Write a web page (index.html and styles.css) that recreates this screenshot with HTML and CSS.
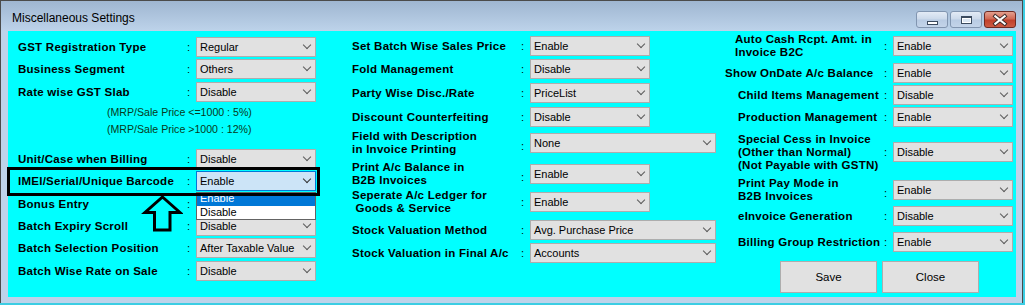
FILE: index.html
```html
<!DOCTYPE html>
<html lang="en">
<head>
  <meta charset="UTF-8" />
  <meta name="viewport" content="width=device-width, initial-scale=1.0" />
  <title>Miscellaneous Settings</title>
  <link rel="stylesheet" href="styles.css">
</head>
<body>
  <div class="window">
    <div class="titlebar">
      <span class="title">Miscellaneous Settings</span>
      <div class="caption-buttons">
        <button class="cap cap-min"><span class="min-glyph"></span></button>
        <button class="cap cap-max"><span class="max-glyph"></span></button>
        <button class="cap cap-close">
          <svg width="32" height="17" viewBox="0 0 32 17">
            <path d="M11 5 L21 13 M21 5 L11 13" stroke="#3a2a28" stroke-width="4.2" stroke-linecap="square" />
            <path d="M11 5 L21 13 M21 5 L11 13" stroke="#fff" stroke-width="2.2" stroke-linecap="square" />
          </svg>
        </button>
      </div>
    </div>

    <div class="client">
      <div class="col col-1">
        <div class="row"><span class="label">GST Registration Type</span><span class="colon">:</span><div class="combo">Regular</div></div>
        <div class="row"><span class="label">Business Segment</span><span class="colon">:</span><div class="combo">Others</div></div>
        <div class="row"><span class="label">Rate wise GST Slab</span><span class="colon">:</span><div class="combo">Disable</div></div>
        <div class="notes">
          <p>(MRP/Sale Price &lt;=1000 : 5%)</p>
          <p>(MRP/Sale Price &gt;1000 : 12%)</p>
        </div>
        <div class="row"><span class="label">Unit/Case when Billing</span><span class="colon">:</span><div class="combo">Disable</div></div>
        <div class="row"><span class="label">IMEI/Serial/Unique Barcode</span><span class="colon">:</span><div class="combo focused">Enable</div></div>
        <!-- combo sits under the open list, so nothing of it shows -->
        <div class="row"><span class="label">Bonus Entry</span><span class="colon">:</span><div class="combo"></div></div>
        <div class="row"><span class="label">Batch Expiry Scroll</span><span class="colon">:</span><div class="combo">Disable</div></div>
        <div class="row"><span class="label">Batch Selection Position</span><span class="colon">:</span><div class="combo">After Taxable Value</div></div>
        <div class="row"><span class="label">Batch Wise Rate on Sale</span><span class="colon">:</span><div class="combo">Disable</div></div>
      </div>

      <div class="col col-2">
        <div class="row"><span class="label">Set Batch Wise Sales Price</span><span class="colon">:</span><div class="combo">Enable</div></div>
        <div class="row"><span class="label">Fold Management</span><span class="colon">:</span><div class="combo">Disable</div></div>
        <div class="row"><span class="label">Party Wise Disc./Rate</span><span class="colon">:</span><div class="combo">PriceList</div></div>
        <div class="row"><span class="label">Discount Counterfeiting</span><span class="colon">:</span><div class="combo">Disable</div></div>
        <div class="row"><span class="label">Field with Description<br>in Invoice Printing</span><span class="colon low">:</span><div class="combo wide">None</div></div>
        <div class="row"><span class="label">Print A/c Balance in<br>B2B Invoices</span><span class="colon low">:</span><div class="combo">Enable</div></div>
        <div class="row"><span class="label">Seperate A/c Ledger for<br>&nbsp;Goods &amp; Service</span><span class="colon">:</span><div class="combo">Enable</div></div>
        <div class="row"><span class="label">Stock Valuation Method</span><span class="colon">:</span><div class="combo wide">Avg. Purchase Price</div></div>
        <div class="row"><span class="label">Stock Valuation in Final A/c</span><span class="colon">:</span><div class="combo wide">Accounts</div></div>
      </div>

      <div class="col col-3">
        <div class="row"><span class="label nudge">Auto Cash Rcpt. Amt. in<br>Invoice B2C</span><span class="colon">:</span><div class="combo">Enable</div></div>
        <div class="row"><span class="label shift">Show OnDate A/c Balance</span><span class="colon">:</span><div class="combo">Enable</div></div>
        <div class="row"><span class="label">Child Items Management</span><span class="colon">:</span><div class="combo">Disable</div></div>
        <div class="row"><span class="label">Production Management</span><span class="colon">:</span><div class="combo">Enable</div></div>
        <div class="row"><span class="label">Special Cess in Invoice<br>(Other than Normal)<br>(Not Payable with GSTN)</span><span class="colon">:</span><div class="combo">Disable</div></div>
        <div class="row"><span class="label">Print Pay Mode in<br>B2B Invoices</span><span class="colon low">:</span><div class="combo">Enable</div></div>
        <div class="row"><span class="label">eInvoice Generation</span><span class="colon">:</span><div class="combo">Disable</div></div>
        <div class="row"><span class="label">Billing Group Restriction</span><span class="colon">:</span><div class="combo">Enable</div></div>
        <div class="actions">
          <button class="btn">Save</button>
          <button class="btn">Close</button>
        </div>
      </div>

      <!-- open list of the IMEI combo and the annotation drawn over it -->
      <div class="droplist">
        <div class="opt active">Enable</div>
        <div class="opt">Disable</div>
      </div>
      <div class="focus-box"></div>
      <svg class="pointer" width="42" height="40" viewBox="0 0 42 40">
        <polygon points="21.5,3 39,18.5 29,18.5 29,36 13.5,36 13.5,18.5 4,18.5" fill="#00ffff" stroke="#000" stroke-width="3" />
      </svg>
    </div>
  </div>
</body>
</html>
```

FILE: styles.css
```css
:root {
  --client: #00ffff;
  --frame: #bed3ea;
  --combo-bg: #e1e1e1;
  --combo-border: #adadad;
  --focus-bg: #cce4f7;
  --focus-border: #0078d7;
}

* {
  box-sizing: border-box;
}

body {
  margin: 0;
  background: #3ccde3;
  font-family: "Liberation Sans", Arial, sans-serif;
  color: #000;
}

.window {
  width: 1023px;
  height: 303px;
  background: var(--frame);
  border: 1px solid #4b4b4b;
  border-bottom: none;
  display: flex;
  flex-direction: column;
}

.titlebar {
  height: 30px;
  flex: none;
  display: flex;
  align-items: flex-start;
  background: linear-gradient(#9fb6d1, #bdd3ea);
}

.title {
  margin: 10px 0 0 11px;
  font-size: 12px;
  line-height: 14px;
}

.caption-buttons {
  margin: 10px 6px 0 auto;
  display: flex;
  gap: 2px;
}

.cap {
  width: 32px;
  height: 17px;
  padding: 0;
  border: 1px solid #8195b0;
  border-radius: 3px;
  background: linear-gradient(#e3ebf5 0%, #cbd9ea 48%, #b8cbe3 52%, #c3d4e9 100%);
  display: flex;
  align-items: center;
  justify-content: center;
  position: relative;
}

.cap-close {
  border-color: #6e2a22;
  background: linear-gradient(#e4a08f 0%, #d26a55 45%, #c1412c 55%, #cd5b43 100%);
}

.min-glyph {
  width: 11px;
  height: 4px;
  margin-top: 6px;
  background: #fff;
  border: 1px solid #3b4a5e;
}

.max-glyph {
  width: 11px;
  height: 8px;
  border: 1px solid #3b4a5e;
  border-top-width: 2px;
  background: #dce6f2;
  box-shadow: inset 0 0 0 1px #fff;
}

.client {
  position: relative;
  height: 266px;
  margin: 0 6px 0 7px;
  padding: 5px 0 0 10px;
  background: var(--client);
  display: flex;
  align-items: flex-start;
}

.col {
  display: grid;
  align-content: start;
}

.col-1 {
  width: 298px;
  margin-top: 1px;
  grid-template-rows: 22px 23px 22px 45px 22px 23px 22px 22px 23px 20px;
}

.col-2 {
  width: 364px;
  margin-left: 36px;
  grid-template-rows: 23px 24px 24px 26px 31px 28px 28px 23px 20px;
}

.col-3 {
  width: 275px;
  margin-left: 22px;
  grid-template-rows: 27px 22px 22px 35px 38px 26px 26px 29px 32px;
}

.row {
  height: 20px;
  display: flex;
  align-items: center;
}

.label {
  flex: none;
  width: 169px;
  font-size: 11.5px;
  font-weight: bold;
  letter-spacing: 0.25px;
  line-height: 13px;
  white-space: nowrap;
}

.col-3 .label {
  width: 146px;
}

.col-3 .label.shift {
  width: 159px;
  margin-left: -13px;
}

.col-3 .label.nudge {
  width: 149px;
  margin-left: -3px;
}

.colon {
  flex: none;
  width: 9px;
  font-size: 11px;
}

.colon.low {
  padding-top: 6px;
}

.combo {
  position: relative;
  flex: none;
  width: 120px;
  height: 20px;
  padding-left: 3px;
  background: var(--combo-bg);
  border: 1px solid var(--combo-border);
  font-size: 11px;
  line-height: 18px;
  white-space: nowrap;
}

.combo.wide {
  width: 186px;
}

.combo::after {
  content: "";
  position: absolute;
  right: 5px;
  top: 4px;
  width: 5px;
  height: 5px;
  border-right: 1px solid #5a5a5a;
  border-bottom: 1px solid #5a5a5a;
  transform: rotate(45deg);
}

.combo.focused {
  background: var(--focus-bg);
  border-color: var(--focus-border);
}

.combo.focused::after {
  border-color: #333;
}

.notes {
  padding-left: 89px;
  color: #073a20;
  font-size: 10.6px;
  line-height: 17px;
}

.notes p {
  margin: 0;
}

.actions {
  display: flex;
  gap: 5px;
  margin-left: 42px;
}

.btn {
  width: 97px;
  height: 32px;
  padding: 0;
  background: var(--combo-bg);
  border: 1px solid var(--combo-border);
  font-family: inherit;
  font-size: 11.5px;
  color: #000;
}

.droplist {
  position: absolute;
  left: 188px;
  top: 161px;
  width: 120px;
  background: #fff;
  border: 1px solid #646464;
  font-size: 11px;
  z-index: 2;
}

.opt {
  height: 13px;
  line-height: 13px;
  padding-left: 3px;
}

.opt.active {
  line-height: 11px;
  background: #0078d7;
  color: #fff;
}

.focus-box {
  position: absolute;
  left: -1px;
  top: 136px;
  width: 313px;
  height: 29px;
  border: 3px solid #000;
  z-index: 3;
}

.pointer {
  position: absolute;
  left: 133px;
  top: 163px;
  z-index: 3;
}
```
